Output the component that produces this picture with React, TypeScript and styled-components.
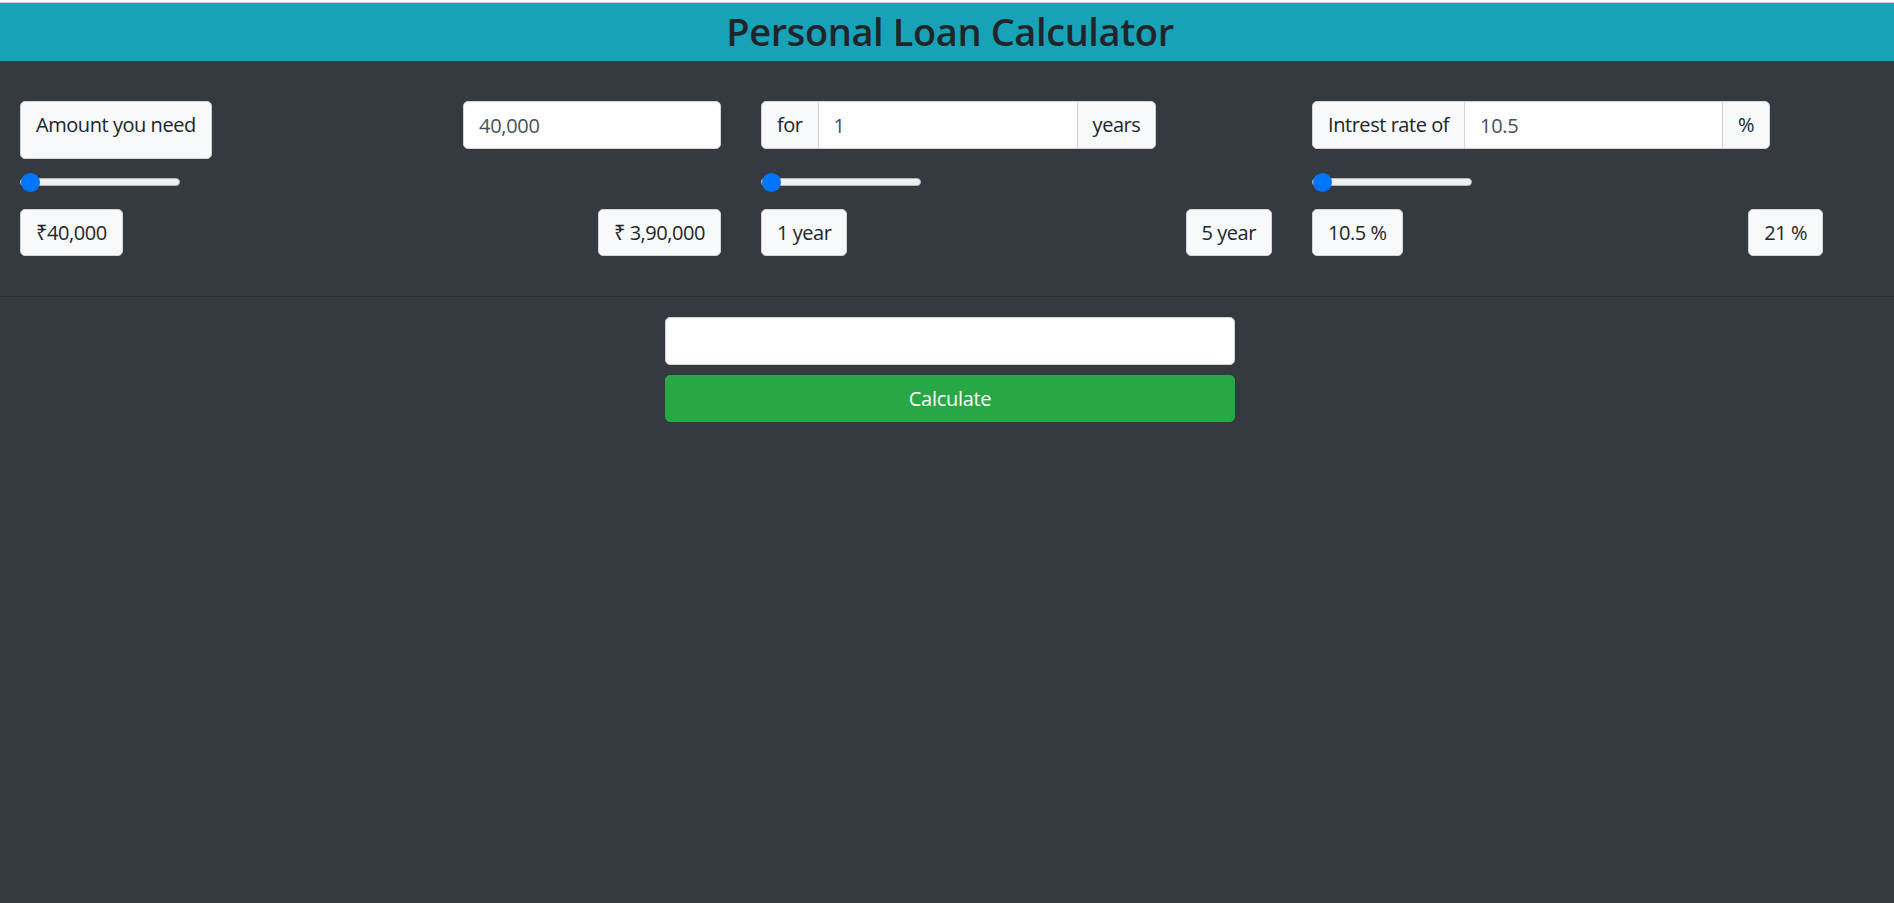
import React from "react";
import styled, { createGlobalStyle } from "styled-components";

const GlobalStyle = createGlobalStyle`
  html, body {
    margin: 0;
    padding: 0;
    background: #343a40;
    min-height: 100%;
  }
  body {
    font-family: "Open Sans", "Noto Sans", "Liberation Sans", sans-serif;
    font-size: 20px;
    line-height: 1.5;
    color: #212529;
  }
  * { box-sizing: border-box; }
`;

const Page = styled.div`
  min-height: 903px;
  background: #343a40;
`;

const TopStrip = styled.div`
  height: 3px;
  background: #ffffff;
  border-bottom: 1px solid #d0d0d0;
`;

const Header = styled.header`
  height: 58px;
  background: #17a2b8;
  display: flex;
  align-items: center;
  justify-content: center;
  padding-left: 6px;
`;

const Title = styled.h1`
  margin: 0;
  font-size: 38px;
  font-weight: 600;
  line-height: 1.2;
  color: #212529;
  letter-spacing: -0.4px;
`;

const Controls = styled.section`
  display: grid;
  grid-template-columns: 701px 511px 511px;
  column-gap: 40px;
  padding: 40px 71px 40px 20px;
  border-bottom: 1px solid #2b3035;
`;

const Column = styled.div`
  display: flex;
  flex-direction: column;
`;

const TopRow = styled.div<{ $spread?: boolean }>`
  height: 58px;
  display: flex;
  align-items: flex-start;
  justify-content: ${(p) => (p.$spread ? "space-between" : "flex-start")};
`;

const Group = styled.div`
  display: flex;
  height: 48px;
`;

const Addon = styled.span<{ $pos?: "left" | "right" | "solo"; $tall?: boolean }>`
  display: flex;
  align-items: flex-start;
  height: ${(p) => (p.$tall ? "58px" : "48px")};
  padding: 8px 15px 0;
  background: #f8f9fa;
  border: 1px solid #ced4da;
  color: #212529;
  font-size: 20px;
  line-height: 30px;
  letter-spacing: -0.45px;
  white-space: nowrap;
  border-radius: ${(p) =>
    p.$pos === "left" ? "5px 0 0 5px" : p.$pos === "right" ? "0 5px 5px 0" : "5px"};
  margin-left: ${(p) => (p.$pos === "right" ? "-1px" : "0")};
`;

const TextInput = styled.input<{ $w: number; $grouped?: boolean }>`
  width: ${(p) => p.$w}px;
  height: 48px;
  padding: 0 15px;
  font-family: inherit;
  font-size: 20px;
  letter-spacing: -0.3px;
  color: #495057;
  background: #ffffff;
  border: 1px solid #ced4da;
  border-radius: ${(p) => (p.$grouped ? "0" : "5px")};
  margin-left: ${(p) => (p.$grouped ? "-1px" : "0")};
  outline: none;
`;

const SliderRow = styled.div`
  margin-top: 13px;
  height: 20px;
  display: flex;
`;

const Range = styled.input`
  -webkit-appearance: none;
  appearance: none;
  width: 160px;
  height: 20px;
  margin: 0;
  background: transparent;

  &::-webkit-slider-runnable-track {
    height: 8px;
    background: #efefef;
    border: 1px solid #b5b5b5;
    border-radius: 5px;
  }
  &::-webkit-slider-thumb {
    -webkit-appearance: none;
    width: 19px;
    height: 19px;
    margin-top: -6px;
    border-radius: 50%;
    background: #0075ff;
    border: none;
  }
`;

const LimitRow = styled.div`
  margin-top: 17px;
  display: flex;
  justify-content: space-between;
`;

const Chip = styled.span`
  display: inline-flex;
  align-items: center;
  height: 47px;
  padding: 0 15px;
  background: #f8f9fa;
  border: 1px solid #ced4da;
  border-radius: 5px;
  color: #212529;
  font-size: 20px;
  line-height: 30px;
  letter-spacing: -0.45px;
  white-space: nowrap;
`;

const Result = styled.section`
  display: flex;
  flex-direction: column;
  gap: 10px;
  width: 570px;
  margin: 20px auto 0;
  position: relative;
  left: 3px;
`;

const ResultBox = styled.input`
  height: 48px;
  width: 100%;
  padding: 0 15px;
  font-family: inherit;
  font-size: 20px;
  background: #ffffff;
  border: 1px solid #ced4da;
  border-radius: 5px;
  outline: none;
`;

const CalcButton = styled.button`
  height: 47px;
  width: 100%;
  font-family: inherit;
  font-size: 20px;
  letter-spacing: -0.3px;
  color: #ffffff;
  background: #28a745;
  border: 1px solid #28a745;
  border-radius: 5px;
  cursor: pointer;
`;

export default function App() {
  return (
    <>
      <GlobalStyle />
      <Page>
        <TopStrip />
        <Header>
          <Title>Personal Loan Calculator</Title>
        </Header>
        <Controls>
          <Column>
            <TopRow $spread>
              <Addon $pos="solo" $tall>Amount you need</Addon>
              <TextInput $w={258} defaultValue="40,000" />
            </TopRow>
            <SliderRow>
              <Range type="range" min={40000} max={390000} defaultValue={40000} />
            </SliderRow>
            <LimitRow>
              <Chip>₹40,000</Chip>
              <Chip>₹ 3,90,000</Chip>
            </LimitRow>
          </Column>
          <Column>
            <TopRow>
              <Group>
                <Addon $pos="left">for</Addon>
                <TextInput $w={260} $grouped defaultValue="1" />
                <Addon $pos="right">years</Addon>
              </Group>
            </TopRow>
            <SliderRow>
              <Range type="range" min={1} max={5} defaultValue={1} />
            </SliderRow>
            <LimitRow>
              <Chip>1 year</Chip>
              <Chip>5 year</Chip>
            </LimitRow>
          </Column>
          <Column>
            <TopRow>
              <Group>
                <Addon $pos="left">Intrest rate of</Addon>
                <TextInput $w={259} $grouped defaultValue="10.5" />
                <Addon $pos="right">%</Addon>
              </Group>
            </TopRow>
            <SliderRow>
              <Range type="range" min={10.5} max={21} step={0.5} defaultValue={10.5} />
            </SliderRow>
            <LimitRow>
              <Chip>10.5 %</Chip>
              <Chip>21 %</Chip>
            </LimitRow>
          </Column>
        </Controls>
        <Result>
          <ResultBox readOnly />
          <CalcButton>Calculate</CalcButton>
        </Result>
      </Page>
    </>
  );
}
